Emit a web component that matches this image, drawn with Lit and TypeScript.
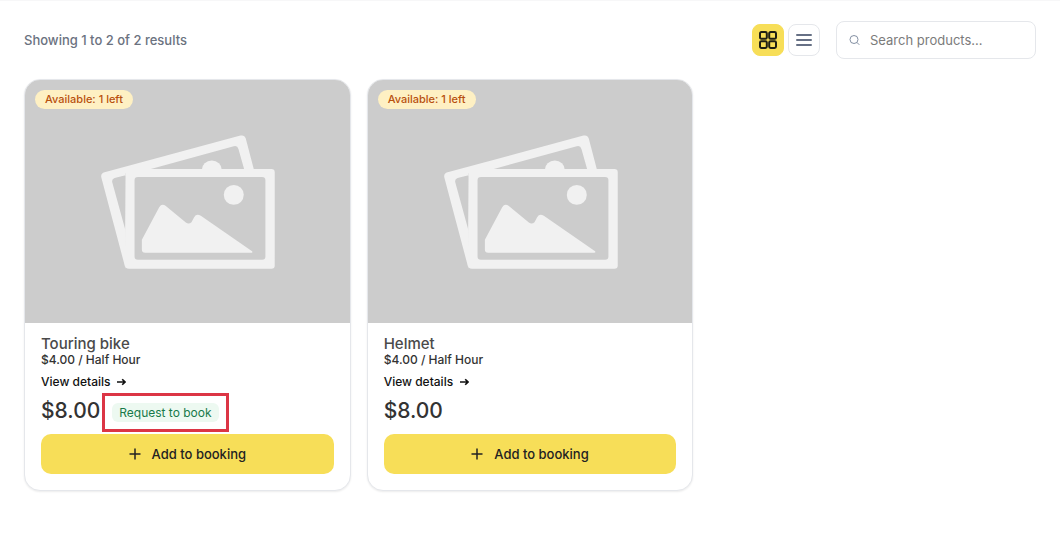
import { LitElement, html, css, svg, nothing } from "lit";
import { customElement, property, state } from "lit/decorators.js";

interface Product {
  name: string;
  rate: string;
  price: string;
  stock: string;
  onRequest: boolean;
}

const placeholder = svg`
  <svg class="picture" viewBox="-195 -120 975 730" aria-hidden="true">
    <g fill="#f1f1f1">
      <path fill-rule="evenodd" d="M44 157 452 47Q464 44 468 56L492 147 492 160 107 160 107 447 34 172Q32 160 44 157ZM74 174Q65 177 67 187L107 333V166ZM183 147 432 79Q443 76 446 87L463 147Z"/>
      <path d="M336 150a30 28 0 0 1 60 0z"/>
      <path fill-rule="evenodd" d="M117 147H545Q555 147 555 157V437Q555 447 545 447H117Q107 447 105 437L107 157ZM144 171Q134 171 134 181V410Q134 420 144 420H517Q527 420 527 410V181Q527 171 517 171Z"/>
      <circle cx="432" cy="225" r="30"/>
      <path d="M156 360 208 262Q216 250 227 258L288 308Q297 315 305 307L313 292Q320 280 333 288L487 394Q490 399 484 399H166Q156 399 156 389Z"/>
    </g>
  </svg>`;

@customElement("product-card")
class ProductCard extends LitElement {
  @property({ attribute: false }) product!: Product;

  static styles = css`
    :host { display: block; }
    .card {
      background: #fff;
      border: 1px solid #e5e7eb;
      border-radius: 16px;
      overflow: hidden;
      box-shadow: 0 1px 2px rgba(0, 0, 0, 0.08);
    }
    .media { position: relative; background: #ccc; }
    .picture { display: block; width: 100%; }
    .stock {
      position: absolute;
      top: 10px;
      left: 10px;
      padding: 0 10px;
      border-radius: 10px;
      background: #fef0c3;
      color: #b8500f;
      font-size: 11px;
      font-weight: 500;
      line-height: 19px;
    }
    .body { padding: 13px 16px 16px; }
    .name { margin: 0; font-size: 15px; line-height: 16px; font-weight: 500; color: #4a4a4a; }
    .rate { margin: 0; font-size: 12px; line-height: 16px; font-weight: 500; color: #333; }
    .details {
      display: flex;
      width: fit-content;
      align-items: center;
      gap: 6px;
      margin-top: 6px;
      font-size: 12px;
      line-height: 16px;
      font-weight: 500;
      color: #111;
      text-decoration: none;
    }
    .total { display: flex; align-items: center; gap: 2px; height: 39px; margin: 3px 0 2px; }
    .price { font-size: 21px; line-height: 28px; font-weight: 500; color: #333; margin-bottom: 4px; }
    .highlight { border: 3px solid #dc3545; padding: 7px; }
    .request {
      display: block;
      padding: 0 7px;
      border-radius: 6px;
      background: #edf9f1;
      color: #18794a;
      font-size: 12px;
      line-height: 19px;
      white-space: nowrap;
    }
    .add {
      display: flex;
      width: 100%;
      height: 40px;
      align-items: center;
      justify-content: center;
      gap: 11px;
      padding: 0;
      border: 0;
      border-radius: 10px;
      background: #f7de58;
      color: #222;
      font: inherit;
      font-size: 13px;
      font-weight: 500;
    }
  `;

  render() {
    const p = this.product;
    return html`
      <article class="card">
        <div class="media">${placeholder}<span class="stock">${p.stock}</span></div>
        <div class="body">
          <h2 class="name">${p.name}</h2>
          <p class="rate">${p.rate}</p>
          <a class="details" href="#">View details
            <svg width="10" height="10" viewBox="0 0 10 10" fill="none" stroke="currentColor" stroke-width="1.6" aria-hidden="true"><path d="M1 5H9M6.2 2.2 9 5 6.2 7.8"/></svg>
          </a>
          <div class="total">
            <span class="price">${p.price}</span>
            ${p.onRequest ? html`<span class="highlight"><span class="request">Request to book</span></span>` : nothing}
          </div>
          <button class="add" type="button">
            <svg width="12" height="12" viewBox="0 0 12 12" stroke="currentColor" stroke-width="1.5" aria-hidden="true"><path d="M6 .5V11.5M.5 6H11.5"/></svg>
            Add to booking
          </button>
        </div>
      </article>`;
  }
}

@customElement("app-root")
class AppRoot extends LitElement {
  @state() private products: Product[] = [
    { name: "Touring bike", rate: "$4.00 / Half Hour", price: "$8.00", stock: "Available: 1 left", onRequest: true },
    { name: "Helmet", rate: "$4.00 / Half Hour", price: "$8.00", stock: "Available: 1 left", onRequest: false },
  ];

  static styles = css`
    :host {
      display: block;
      min-height: 100vh;
      box-sizing: border-box;
      padding: 20px 24px 24px;
      border-top: 1px solid #f7f7f8;
      background: #fff;
      font-family: Inter, "Liberation Sans", sans-serif;
    }
    .bar { display: flex; align-items: center; margin-bottom: 20px; }
    .count { margin: 0 auto 0 0; font-size: 13px; line-height: 20px; font-weight: 500; color: #6b7280; }
    .views { display: flex; gap: 4px; margin-right: 16px; }
    .view {
      display: grid;
      place-items: center;
      box-sizing: border-box;
      width: 32px;
      height: 32px;
      padding: 0;
      border: 1px solid #e5e7eb;
      border-radius: 8px;
      background: #fff;
      color: #667085;
    }
    .view.active { border-color: #f7de58; background: #f7de58; color: #1f1f14; }
    .search {
      display: flex;
      align-items: center;
      gap: 9px;
      box-sizing: border-box;
      width: 200px;
      height: 38px;
      padding: 0 12px;
      border: 1px solid #e5e7eb;
      border-radius: 8px;
      color: #8490a3;
    }
    .search svg { flex: none; }
    .field {
      flex: 1;
      min-width: 0;
      padding: 0;
      border: 0;
      outline: 0;
      background: none;
      font: inherit;
      font-size: 13px;
      color: #333;
    }
    .field::placeholder { color: #7b7b7b; opacity: 1; }
    .grid { display: grid; grid-template-columns: repeat(3, 1fr); gap: 16px; }
  `;

  render() {
    return html`
      <header class="bar">
        <p class="count">Showing 1 to 2 of 2 results</p>
        <div class="views">
          <button class="view active" type="button" aria-label="Grid view">
            <svg width="18" height="18" viewBox="0 0 18 18" fill="none" stroke="currentColor" stroke-width="2" aria-hidden="true">
              <rect x="1" y="1" width="6.8" height="6.8" rx="1.4"/><rect x="10.2" y="1" width="6.8" height="6.8" rx="1.4"/>
              <rect x="1" y="10.2" width="6.8" height="6.8" rx="1.4"/><rect x="10.2" y="10.2" width="6.8" height="6.8" rx="1.4"/>
            </svg>
          </button>
          <button class="view" type="button" aria-label="List view">
            <svg width="16" height="12" viewBox="0 0 16 12" stroke="currentColor" stroke-width="2" stroke-linecap="round" aria-hidden="true"><path d="M1 1H15M1 6H15M1 11H15"/></svg>
          </button>
        </div>
        <label class="search">
          <svg width="12" height="12" viewBox="0 0 12 12" fill="none" stroke="currentColor" aria-hidden="true"><circle cx="5" cy="5.5" r="4"/><path d="M7.9 8.4 10.3 10.8"/></svg>
          <input class="field" type="search" placeholder="Search products..." aria-label="Search products" />
        </label>
      </header>
      <main class="grid">
        ${this.products.map((p) => html`<product-card .product=${p}></product-card>`)}
      </main>`;
  }
}
